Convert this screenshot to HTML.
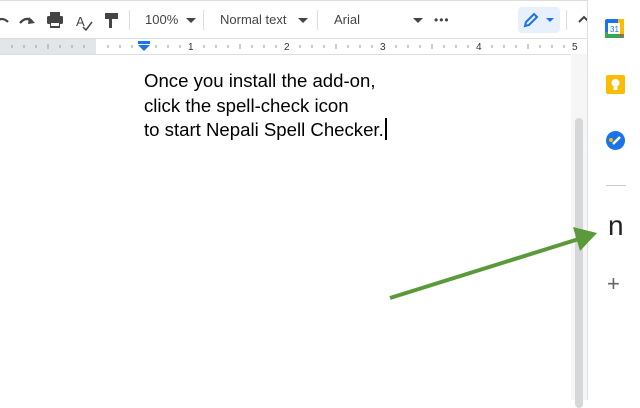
<!DOCTYPE html>
<html><head><style>
body{margin:0;width:640px;height:400px;overflow:hidden;background:#fff;font-family:"Liberation Sans",Arial,sans-serif;position:relative}
.a{position:absolute}
.tb{color:#444;font-size:13px}
</style></head><body>
<div class="a" style="left:0;top:0;width:588px;height:1px;background:#ddd"></div>
<svg class="a" style="left:0;top:8px" width="120" height="24" viewBox="0 0 120 24">
<path d="M-4 14 Q2 8 8 14" stroke="#444" stroke-width="2.2" fill="none"/>
<path d="M20 15 Q26 8 32 13" stroke="#444" stroke-width="2.2" fill="none"/><path d="M29 9 L35 15 L28 16Z" fill="#444"/>
<rect x="47" y="8" width="16" height="8" rx="1.5" fill="#444"/><rect x="50" y="4" width="10" height="4" fill="#444"/><rect x="50" y="14" width="10" height="6" fill="#444"/><rect x="51" y="15" width="8" height="3" fill="#fff"/>
<text x="76" y="18" font-size="13" fill="#444" font-family="Liberation Sans">A</text><path d="M83 19 L86 22 L92 14" stroke="#444" stroke-width="1.5" fill="none"/>
<rect x="105" y="5" width="13" height="6" fill="#444"/><rect x="109" y="11" width="3" height="9" fill="#444"/>
</svg>
<div class="a" style="left:129px;top:10px;width:1px;height:20px;background:#ddd"></div>
<div class="a tb" style="left:145px;top:12px">100%</div>
<svg class="a" style="left:186px;top:18px" width="10" height="6"><path d="M0 0H10L5 5Z" fill="#444"/></svg>
<div class="a" style="left:203px;top:10px;width:1px;height:20px;background:#ddd"></div>
<div class="a tb" style="left:220px;top:12px">Normal text</div>
<svg class="a" style="left:298px;top:18px" width="10" height="6"><path d="M0 0H10L5 5Z" fill="#444"/></svg>
<div class="a" style="left:317px;top:10px;width:1px;height:20px;background:#ddd"></div>
<div class="a tb" style="left:334px;top:12px">Arial</div>
<svg class="a" style="left:413px;top:18px" width="10" height="6"><path d="M0 0H10L5 5Z" fill="#444"/></svg>
<div class="a" style="left:434px;top:16px;color:#444;font-size:12px;letter-spacing:1px;line-height:8px">•••</div>
<div class="a" style="left:518px;top:7px;width:42px;height:26px;background:#e8f0fe;border-radius:4px"></div>
<svg class="a" style="left:522px;top:11px" width="36" height="18"><path d="M3 15 L4 11 L12 3 L15 6 L7 14Z" stroke="#1a73e8" stroke-width="2" fill="none"/><path d="M24 7H32L28 11Z" fill="#1a73e8"/></svg>
<div class="a" style="left:566px;top:10px;width:1px;height:20px;background:#ddd"></div>
<svg class="a" style="left:578px;top:14px" width="10" height="10"><path d="M1 8 L6 3 L11 8" stroke="#444" stroke-width="2" fill="none"/></svg>
<div class="a" style="left:0;top:38px;width:588px;height:15px;background:#fff;border-top:1px solid #ddd;border-bottom:1px solid #ddd"></div>
<div class="a" style="left:0;top:39px;width:96px;height:15px;background:#e3e6e9"></div>
<svg class="a" style="left:0;top:39px" width="588" height="15">
<g stroke="#999" stroke-width="1">
<path d="M12 6v3M24 6v3M36 6v3M48 5v5M60 6v3M72 6v3M84 6v3M108 6v3M120 6v3M132 6v3M156 6v3M168 6v3M180 6v3M204 6v3M216 6v3M228 6v3M240 5v5M252 6v3M264 6v3M276 6v3M300 6v3M312 6v3M324 6v3M336 5v5M348 6v3M360 6v3M372 6v3M396 6v3M408 6v3M420 6v3M432 5v5M444 6v3M456 6v3M468 6v3M492 6v3M504 6v3M516 6v3M528 5v5M540 6v3M552 6v3M564 6v3"/></g>
<g font-size="10" fill="#333" font-family="Liberation Sans"><text x="188" y="11">1</text><text x="284" y="11">2</text><text x="380" y="11">3</text><text x="476" y="11">4</text><text x="572" y="11">5</text></g>
<rect x="138" y="2" width="12" height="3" fill="#1a73e8"/><path d="M138 6H150L144 12Z" fill="#1a73e8"/>
</svg>
<div class="a" style="left:571px;top:54px;width:16px;height:346px;background:#f6f6f6"></div>
<div class="a" style="left:575px;top:118px;width:8px;height:290px;background:#d6d7d9;border-radius:4px"></div>
<div class="a" style="left:587px;top:0;width:1px;height:400px;background:#e0e0e0"></div>
<div class="a" style="left:144px;top:69px;font-size:18.6px;line-height:24.5px;color:#000">Once you install the add-on,<br>click the spell-check icon<br>to start Nepali Spell Checker.<span style="display:inline-block;width:2px;height:22px;background:#000;vertical-align:-4px;margin-left:1px"></span></div>
<svg class="a" style="left:605px;top:19px" width="20" height="20"><rect x="0" y="0" width="19" height="19" rx="2" fill="#1a73e8"/><rect x="0" y="13" width="19" height="6" fill="#34a853"/><rect x="13" y="0" width="6" height="15" fill="#fbbc04"/><rect x="3" y="4" width="12" height="11" fill="#fff"/><text x="5" y="13" font-size="8" fill="#1a73e8" font-family="Liberation Sans">31</text><path d="M15 15h4l-4 4z" fill="#ea4335"/></svg>
<svg class="a" style="left:606px;top:75px" width="20" height="20"><rect width="19" height="19" rx="2" fill="#fbbc04"/><circle cx="9.5" cy="8" r="4" fill="#fff"/><rect x="7.5" y="12" width="4" height="3" fill="#fff"/></svg>
<svg class="a" style="left:606px;top:131px" width="20" height="20"><circle cx="9.5" cy="9.5" r="9.5" fill="#1a73e8"/><path d="M7 13 L14 6" stroke="#fff" stroke-width="2.5"/><circle cx="5" cy="9" r="2" fill="#fbbc04"/></svg>
<div class="a" style="left:606px;top:185px;width:20px;height:1px;background:#ccc"></div>
<div class="a" style="left:608px;top:210px;font-size:28px;color:#222">n</div>
<div class="a" style="left:607px;top:272px;font-size:22px;color:#666;line-height:24px">+</div>
<svg class="a" style="left:0;top:0" width="640" height="400"><path d="M390 298 L582 238" stroke="#5b9a3a" stroke-width="4"/><path d="M597 233 L573 227 L580 251Z" fill="#5b9a3a"/></svg>
</body></html>
